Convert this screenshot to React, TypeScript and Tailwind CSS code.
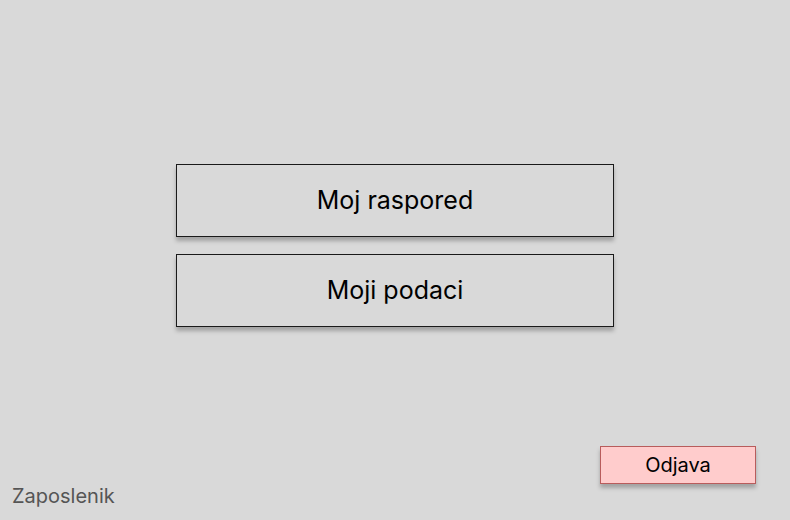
import React from 'react';

export default function App() {
  return (
    <div className="flex h-[520px] w-[790px] flex-col bg-[#d9d9d9] font-['Inter',sans-serif]">
      {/* Main menu */}
      <div className="flex flex-col items-center gap-[17px] pt-[164px]">
        <button className="flex h-[73px] w-[438px] items-center justify-center border border-[#1a1a1a] bg-[#d9d9d9] text-[25px] text-black shadow-[0_4px_4px_rgba(0,0,0,0.25)]">
          Moj raspored
        </button>
        <button className="flex h-[73px] w-[438px] items-center justify-center border border-[#1a1a1a] bg-[#d9d9d9] text-[25px] text-black shadow-[0_4px_4px_rgba(0,0,0,0.25)]">
          Moji podaci
        </button>
      </div>

      <div className="flex-1" />

      {/* Footer */}
      <div className="flex items-end justify-between pb-[12px] pl-[12px] pr-[34px]">
        <span className="text-[20px] leading-[24px] text-[#555555]">Zaposlenik</span>
        <button className="mb-[24px] flex h-[38px] w-[156px] items-center justify-center border-[1.5px] border-[#b85c5c] bg-[#ffcccc] text-[20px] text-black shadow-[0_4px_4px_rgba(0,0,0,0.25)]">
          Odjava
        </button>
      </div>
    </div>
  );
}
